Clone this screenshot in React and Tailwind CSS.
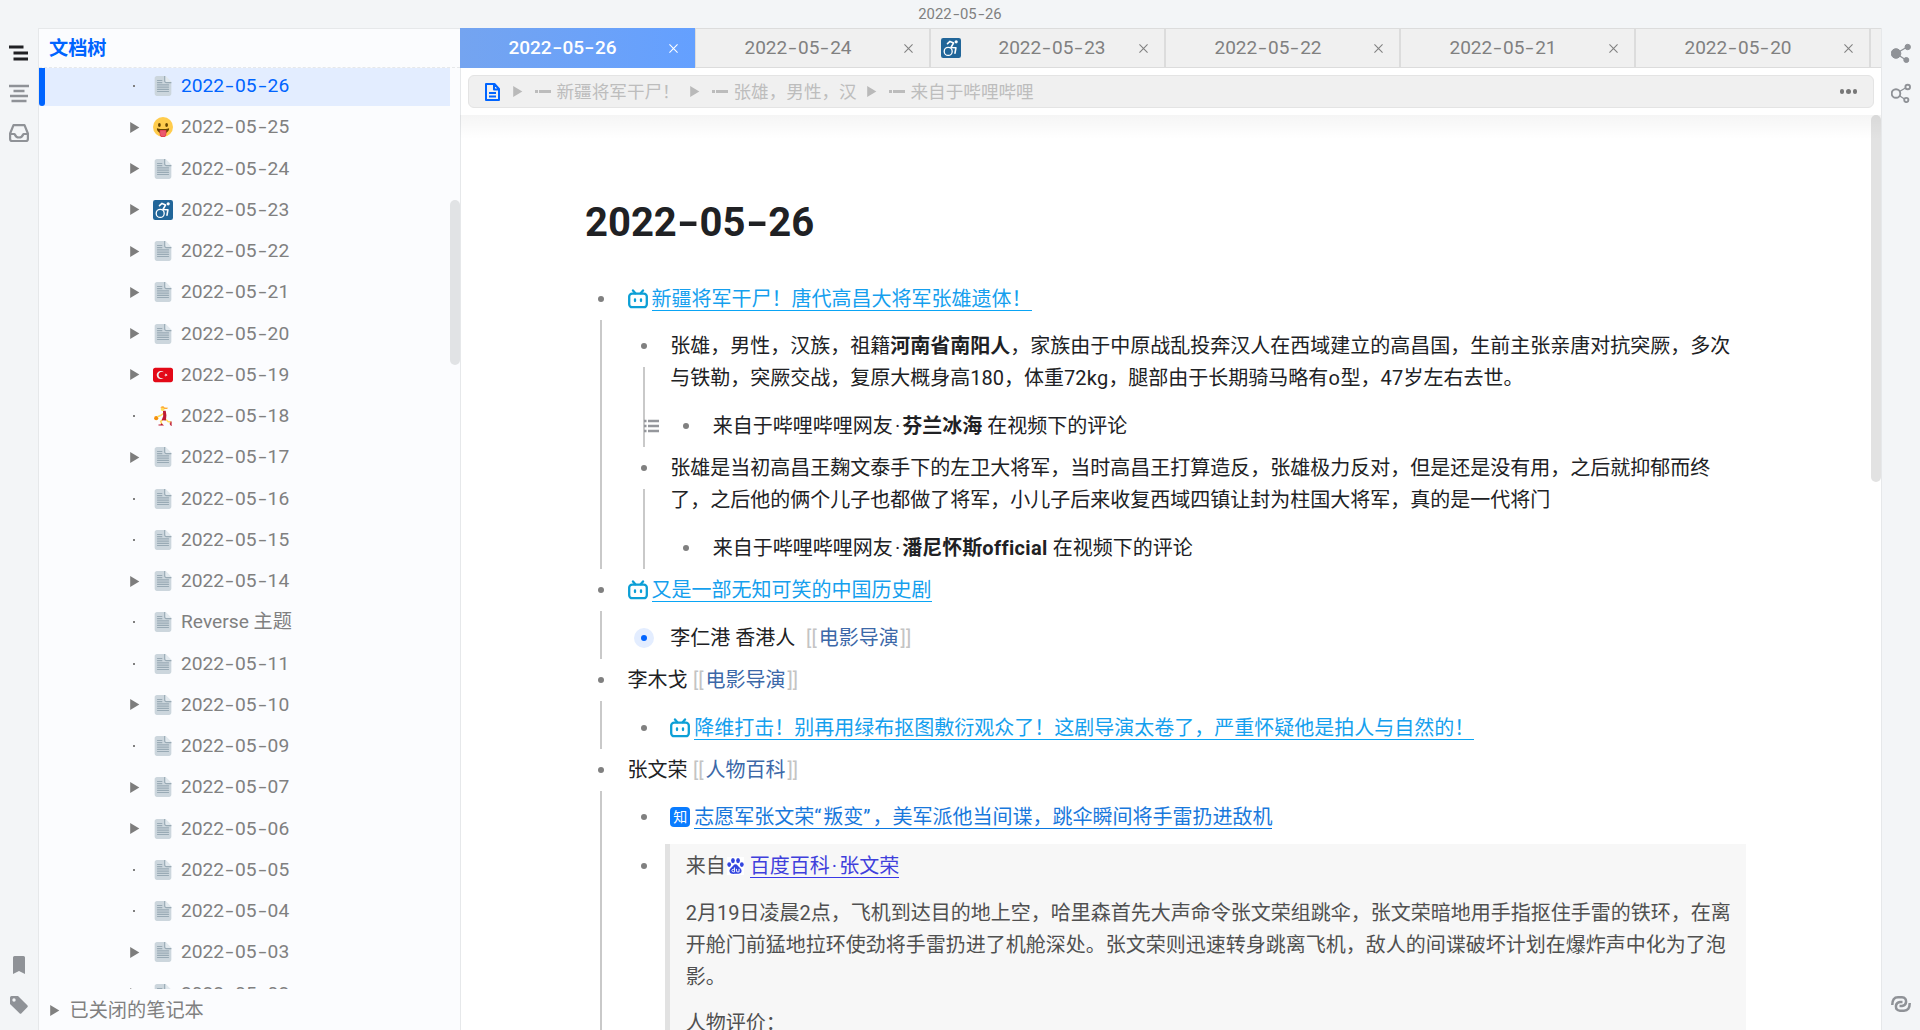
const DocIcon = ({ className = '' }) => (
  <svg viewBox="0 0 36 36" className={`h-5 w-5 shrink-0 ${className}`}>
    <path fill="#E1E8ED" d="M32.415 9.586l-9-9C23.054.225 22.553 0 22 0c-1.104 0-1.999.896-2 2 0 .552.224 1.053.586 1.415l-3.859 3.859 9 9 3.859-3.859c.362.361.862.585 1.414.585 1.104 0 2.001-.896 2-2 0-.552-.224-1.052-.585-1.414z" />
    <path fill="#CCD6DD" d="M22 0H7C4.791 0 3 1.791 3 4v28c0 2.209 1.791 4 4 4h22c2.209 0 4-1.791 4-4V11h-9c-1 0-2-1-2-2V0z" />
    <path fill="#99AAB5" d="M22 0h-2v9c0 2.209 1.791 4 4 4h9v-2h-9c-1 0-2-1-2-2V0zm-5 8c0 .552-.448 1-1 1H8c-.552 0-1-.448-1-1s.448-1 1-1h8c.552 0 1 .448 1 1zm0 4c0 .552-.448 1-1 1H8c-.552 0-1-.448-1-1s.448-1 1-1h8c.552 0 1 .448 1 1zm12 4c0 .552-.447 1-1 1H8c-.552 0-1-.448-1-1s.448-1 1-1h20c.553 0 1 .448 1 1zm0 4c0 .553-.447 1-1 1H8c-.552 0-1-.447-1-1 0-.553.448-1 1-1h20c.553 0 1 .447 1 1zm0 4c0 .553-.447 1-1 1H8c-.552 0-1-.447-1-1 0-.553.448-1 1-1h20c.553 0 1 .447 1 1zm0 4c0 .553-.447 1-1 1H8c-.552 0-1-.447-1-1 0-.553.448-1 1-1h20c.553 0 1 .447 1 1z" />
  </svg>
);

const TongueIcon = () => (
  <svg viewBox="0 0 36 36" className="h-5 w-5 shrink-0">
    <circle cx="18" cy="18" r="18" fill="#FFCC4D" />
    <ellipse cx="11.5" cy="14.5" rx="2.5" ry="3.5" fill="#664500" />
    <ellipse cx="24.5" cy="14.5" rx="2.5" ry="3.5" fill="#664500" />
    <path fill="#664500" d="M7 21.3c0-.8.8-1 1.500-.8 6 1.400 13 1.400 19 0 .8-.2 1.500 0 1.500.8 0 3-3.500 8.700-11 8.700S7 24.300 7 21.300z" />
    <path fill="#DD2E44" d="M12 23.500h12V30a6 6 0 0 1-12 0z" />
    <path fill="#EA596E" d="M13 24.500h10V30a5 5 0 0 1-10 0z" />
  </svg>
);

const WheelchairIcon = ({ className = '' }) => (
  <svg viewBox="0 0 20 20" className={`h-5 w-5 shrink-0 ${className}`}>
    <rect width="20" height="20" rx="2.200" fill="#226699" />
    <g fill="none" stroke="#fff" strokeLinecap="round" strokeLinejoin="round">
      <circle cx="7.200" cy="13.400" r="4" strokeWidth="1.300" />
      <path d="M6.500 5.600 9 3.400l3.600 1.500-2.600 4.600 4.900.3-.9 5.400" strokeWidth="1.600" />
    </g>
    <circle cx="15.200" cy="3.800" r="1.600" fill="#fff" />
  </svg>
);

const FlagIcon = () => (
  <svg viewBox="0 0 36 36" className="h-5 w-5 shrink-0">
    <path fill="#E30917" d="M36 27c0 2.209-1.791 4-4 4H4c-2.209 0-4-1.791-4-4V9c0-2.209 1.791-4 4-4h28c2.209 0 4 1.791 4 4v18z" />
    <path fill="#EEE" d="M16 24c-3.314 0-6-2.685-6-6 0-3.314 2.686-6 6-6 1.310 0 2.520.425 3.507 1.138-1.348-1.524-3.312-2.491-5.507-2.491-4.061 0-7.353 3.292-7.353 7.353 0 4.062 3.292 7.354 7.353 7.354 2.195 0 4.160-.967 5.507-2.492C18.521 23.575 17.312 24 16 24zm3.913-5.770l2.440.562.220 2.493 1.288-2.146 2.440.561-1.644-1.888 1.287-2.147-2.303.980-1.644-1.889.220 2.494z" />
  </svg>
);

const BasketballIcon = () => (
  <svg viewBox="0 0 20 20" className="h-5 w-5 shrink-0">
    <circle cx="3.200" cy="12.200" r="2.100" fill="#F4900C" />
    <path d="M11 7 7.500 9.500 4.500 10.800M9.700 14l-2 1.200 1.200 3.200M13 13.500l2 2 3.200.8" stroke="#FFDC5D" strokeWidth="1.500" fill="none" />
    <path d="M10 4.800h2.700l.7 4.500-.5 5.200-4.300-.3 1.600-4z" fill="#BE1931" />
    <circle cx="9.600" cy="3" r="1.900" fill="#FFDC5D" />
    <path d="M7.500 1.800C8-.2 11-.2 11.500 1.500l3.700.2-1.200 1.400-2.700-.2-.9-.8z" fill="#FFAC33" />
    <path d="M8 17.800 9.400 19H5.500M18 15.500v3.300l-1-1.500" stroke="#BE1931" strokeWidth="1.200" fill="none" />
  </svg>
);

const BiliIcon = () => (
  <svg viewBox="0 0 20 20" className="mt-1.5 mr-1 inline-block h-5 w-5 align-top" fill="none" stroke="#0c9fd6" strokeLinecap="round" strokeWidth="2.300">
    <rect x="1.200" y="4.600" width="17.600" height="13.600" rx="3" />
    <path d="M5 1.500 7.300 4.200M15 1.500 12.700 4.200M7 10.300v1.800M13 10.300v1.800" />
  </svg>
);

const ZhihuIcon = () => (
  <span className="mt-1.5 mr-1 inline-flex h-5 w-5 items-center justify-center rounded bg-[#0a7cff] align-top text-[14px] leading-5 text-white">知</span>
);

const BaiduIcon = () => (
  <svg viewBox="0 0 18 18" className="mt-[7px] mr-1.5 ml-px inline-block h-[18px] w-[17px] bg-white align-top" fill="#3245df">
    <ellipse cx="6.300" cy="3.300" rx="2" ry="2.700" />
    <ellipse cx="11.700" cy="3.300" rx="2" ry="2.700" />
    <ellipse cx="2.300" cy="7.500" rx="2" ry="2.500" />
    <ellipse cx="15.700" cy="7.500" rx="2" ry="2.500" />
    <path d="M9 7.200c-2 0-2.700 2.200-4.300 3.500-1.600 1.400-2.500 2.600-2 4.400.6 2.300 2.900 2.400 6.300 2.200s5.700.1 6.300-2.200c.5-1.800-.4-3-2-4.400C11.700 9.400 11 7.200 9 7.200z" />
    <path d="M8 10.500v4.700H6.600a1.300 1.300 0 0 1 0-2.700H8M10 12v2.200q0 1 1 1h1.800V12" fill="none" stroke="#fff" strokeWidth="1" />
  </svg>
);

const Arrow = ({ className = '' }) => (
  <svg viewBox="0 0 10 12" className={className} fill="currentColor">
    <path d="M0 0 10 6 0 12z" />
  </svg>
);

const DateText = ({ value }) =>
  value.split('-').map((part, i) => (
    <span key={i}>
      {i > 0 && <span className="inline-block w-[0.57em] scale-x-150 text-center">-</span>}
      {part}
    </span>
  ));

const Dot = () => <span className="inline-block w-[9.500px] text-center">·</span>;

const rows = [
  ['2022-05-26', false, 'doc'],
  ['2022-05-25', true, 'tongue'],
  ['2022-05-24', true, 'doc'],
  ['2022-05-23', true, 'wheel'],
  ['2022-05-22', true, 'doc'],
  ['2022-05-21', true, 'doc'],
  ['2022-05-20', true, 'doc'],
  ['2022-05-19', true, 'flag'],
  ['2022-05-18', false, 'ball'],
  ['2022-05-17', true, 'doc'],
  ['2022-05-16', false, 'doc'],
  ['2022-05-15', false, 'doc'],
  ['2022-05-14', true, 'doc'],
  ['Reverse 主题', false, 'doc'],
  ['2022-05-11', false, 'doc'],
  ['2022-05-10', true, 'doc'],
  ['2022-05-09', false, 'doc'],
  ['2022-05-07', true, 'doc'],
  ['2022-05-06', true, 'doc'],
  ['2022-05-05', false, 'doc'],
  ['2022-05-04', false, 'doc'],
  ['2022-05-03', true, 'doc'],
  ['2022-05-02', true, 'doc'],
];

const icons = { doc: DocIcon, tongue: TongueIcon, wheel: WheelchairIcon, flag: FlagIcon, ball: BasketballIcon };

const TreeRow = ({ row: [label, hasChildren, icon], active }) => {
  const Icon = icons[icon];
  return (
    <div className={`mb-[3.250px] flex h-[38px] w-[411px] shrink-0 ${active ? 'bg-[#e3edff] text-[#0064ff]' : 'text-[#808080]'}`}>
      <div className={`w-1.5 shrink-0 rounded-b-sm ${active ? 'bg-[#0064ff]' : ''}`} />
      <div className="flex h-9 items-center">
        <div className="flex w-[108px] justify-end pr-[13.500px]">
          {hasChildren ? <Arrow className="h-[11px] w-[9.500px] text-[#7d7d7d]" /> : <span className="mr-[5px] h-0.5 w-0.5 bg-[#808080]" />}
        </div>
        <Icon />
        <span className="ml-2 text-[19.200px] leading-9">{label.startsWith('2') ? <DateText value={label} /> : label}</span>
      </div>
    </div>
  );
};

const tabs = ['2022-05-26', '2022-05-24', '2022-05-23', '2022-05-22', '2022-05-21', '2022-05-20'];

const Tab = ({ label, active, icon }) => (
  <div
    className={`flex h-10 w-[235px] shrink-0 items-center pr-4 ${
      active ? 'bg-linear-to-r from-[#74a4f0] to-[#64a0ff] text-white' : 'border border-[#dcdcdc] bg-[#f0f0f0] text-[#808080]'
    }`}
  >
    {icon && <WheelchairIcon className="ml-2.5" />}
    <span className={`flex-1 text-center text-[19px] ${icon ? 'pl-1' : 'pr-1'} ${active ? 'font-medium' : ''}`}>
      <DateText value={label} />
    </span>
    <svg viewBox="0 0 10 10" className={`h-[9px] w-[9px] ${active ? 'mr-px' : ''}`} stroke="currentColor" strokeWidth="1.200">
      <path d="M.5.5l9 9M9.500.5l-9 9" />
    </svg>
  </div>
);

const Crumb = ({ children }) => (
  <div className="flex h-full items-center">
    <Arrow className="mr-3 h-[11px] w-[9.500px] text-[#b9b9b9]" />
    <span className="mr-px h-[3px] w-[3px] bg-[#bcbcbc]" />
    <span className="mr-1.5 h-[3px] w-3 bg-[#bcbcbc]" />
    <span className="w-[133.500px] pt-0.5 text-[17.600px] text-[#bdbdbd]">{children}</span>
  </div>
);

const Item = ({ children, nested, active, quote }) => (
  <li className="relative py-[5.100px] pl-[42.600px]">
    {nested && <span className="absolute top-[42px] bottom-0 left-[15px] w-0.5 bg-[#c9c9c9]" />}
    <span
      className={`absolute left-1.5 flex h-5 w-5 items-center justify-center rounded-full ${quote ? 'top-[17px]' : 'top-[11px]'} ${active ? 'bg-[#e3edff]' : ''}`}
    >
      <span className={`h-1.5 w-1.5 rounded-full ${active ? 'bg-[#0064ff]' : 'bg-[#808080]'}`} />
    </span>
    <div>{children}</div>
    {nested && <ul className="mt-[10.600px] mb-[-5.100px]">{nested}</ul>}
  </li>
);

const Link = ({ children, className = 'border-[#0aa5f5] text-[#159fee]' }) => (
  <span className={`inline-block h-[28px] border-b align-top ${className}`}>{children}</span>
);

const Ref = ({ children, className = 'ml-[3.500px]' }) => (
  <span className={className}>
    <span className="inline-block w-[14.500px] text-center text-[#c4c4c4]">[[</span>
    <span className="text-[#3c68a8]">{children}</span>
    <span className="inline-block w-[14.500px] text-center text-[#c4c4c4]">]]</span>
  </span>
);

export default function App() {
  return (
    <div className="flex h-[1030px] w-[1920px] flex-col overflow-hidden bg-[#f3f5f7] text-[#202124] [font-family:Roboto,'Noto_Sans_CJK_SC',sans-serif]">
      <header className="flex h-7 shrink-0 items-center justify-center text-[14.800px] text-[#808080]">
        <span>
          <DateText value="2022-05-26" />
        </span>
      </header>
      <div className="flex h-[1002px]">
        <nav className="flex w-[38px] shrink-0 flex-col items-center text-[#8f9297]">
          <svg viewBox="0 0 20 20" className="mt-[15px] h-5 w-5 text-[#202124]" stroke="currentColor" strokeWidth="3">
            <path d="M0 4h14.500M4.500 10H19M4.500 16H19" />
          </svg>
          <svg viewBox="0 0 20 20" className="mt-5 h-5 w-5" stroke="currentColor" strokeWidth="2.600">
            <path d="M0 3h20M4.500 8h11M1 13h18M2.500 18h15" />
          </svg>
          <svg viewBox="0 0 20 20" className="mt-5 h-5 w-5" fill="none" stroke="currentColor" strokeWidth="2.200" strokeLinejoin="round">
            <path d="M1.100 10.500 4.500 2.200h11L18.900 10.500V16q0 2-2 2H3.100q-2 0-2-2zM1 11h4.500q1.500 3.500 4.500 3.500t4.500-3.500H19" />
          </svg>
          <svg viewBox="0 0 12 18" className="mt-auto h-[18px] w-3" fill="currentColor">
            <path d="M1.500 0h9Q12 0 12 1.500V18l-6-3-6 3V1.500Q0 0 1.500 0z" />
          </svg>
          <svg viewBox="0 0 18 18" className="mt-[22px] mb-4 h-[18px] w-[18px]" fill="currentColor" fillRule="evenodd">
            <path d="M1.500 0H8l9.300 9.300q1 1 0 2L11.500 17.300q-1 1-2 0L0 8V1.500Q0 0 1.500 0zM4 2.300a1.700 1.700 0 1 0 0 3.400 1.700 1.700 0 0 0 0-3.400z" />
          </svg>
        </nav>

        <aside className="relative flex w-[423px] shrink-0 flex-col border-x border-t border-[#e6e8ea] bg-[#fbfcfe]">
          <div className="h-[39px] shrink-0 border-b border-dashed border-[#e6e8ea] pl-2.5 text-[19.200px] leading-10 font-bold text-[#0064ff]">文档树</div>
          <div className="flex h-[921px] flex-col overflow-hidden">
            {rows.map((row, i) => (
              <TreeRow key={row[0]} row={row} active={i === 0} />
            ))}
          </div>
          <div className="flex h-10 items-center pt-0.5 pl-[11px] text-[19.200px] text-[#808080]">
            <Arrow className="mr-2.5 h-[11px] w-[9.500px]" />
            <span className="pt-0.5">已关闭的笔记本</span>
          </div>
          <span className="absolute top-[171px] right-0 h-[165px] w-2.5 rounded-full bg-[#e1e3e5]" />
        </aside>

        <main className="-ml-px flex min-w-0 flex-1 flex-col bg-white">
          <div className="z-10 flex h-10 shrink-0 overflow-hidden">
            {tabs.map((label, i) => (
              <Tab key={label} label={label} active={i === 0} icon={i === 2} />
            ))}
            <div className="h-10 flex-1 border border-r-0 border-[#dcdcdc] bg-[#f0f0f0]" />
          </div>
          <div className="h-[47px] shrink-0 pt-[7px] pr-[7px] pl-2">
            <div className="flex h-[33px] items-center rounded-md border border-[#e4e4e4] bg-[#f0f0f0] pr-4 pl-4">
              <svg viewBox="0 0 15 18" className="mr-[13px] h-[18px] w-[15px]" fill="none" stroke="#0064ff" strokeWidth="2" strokeLinejoin="round">
                <path d="M1 1h8.500L14 6v11H1zM9 1v5.500h5M4 10h7M4 13.500h7" />
              </svg>
              <Crumb>新疆将军干尸！</Crumb>
              <Crumb>张雄，男性，汉</Crumb>
              <Crumb>来自于哔哩哔哩</Crumb>
              <div className="ml-auto flex gap-0.5">
                <i className="h-[4.500px] w-[4.500px] rounded-full bg-[#777]" />
                <i className="h-[4.500px] w-[4.500px] rounded-full bg-[#777]" />
                <i className="h-[4.500px] w-[4.500px] rounded-full bg-[#777]" />
              </div>
            </div>
          </div>

          <div className="relative h-[915px] overflow-hidden pl-[125px]">
            <span className="absolute top-0 right-0 h-[367px] w-2.5 rounded-full bg-[#e2e2e2]" />
            <span className="absolute inset-x-0 top-0 h-6 bg-linear-to-b from-black/4 to-transparent" />
            <h1 className="mt-[78px] text-[40px] leading-[60px] font-bold">
              <DateText value="2022-05-26" />
            </h1>
            <ul className="mt-[24.500px] w-[1160px] text-[20px] leading-8 whitespace-nowrap">
              <Item
                nested={
                  <>
                    <Item
                      nested={
                        <Item>
                          <svg viewBox="0 0 15 14" className="absolute top-[14px] -left-[26px] h-[14px] w-[15px]" stroke="#95979c" strokeWidth="2.400">
                            <path d="M0 2h2.500M4 2h11M0 7h2.500M4 7h11M0 12h2.500M4 12h11" />
                          </svg>
                          来自于哔哩哔哩网友
                          <Dot />
                          <b>芬兰冰海</b> 在视频下的评论
                        </Item>
                      }
                    >
                      张雄，男性，汉族，祖籍<b>河南省南阳人</b>，家族由于中原战乱投奔汉人在西域建立的高昌国，生前主张亲唐对抗突厥，多次
                      <br />
                      与铁勒，突厥交战，复原大概身高180，体重<span className="tracking-[0.2px]">72kg</span>，腿部由于长期骑马略有
                      <span className="tracking-[0.8px]">o</span>型，<span className="tracking-[0.2px]">47</span>岁左右去世。
                    </Item>
                    <Item
                      nested={
                        <Item>
                          来自于哔哩哔哩网友
                          <Dot />
                          <b>
                            潘尼怀斯<span className="tracking-[0.35px]">official</span>
                          </b>{' '}
                          在视频下的评论
                        </Item>
                      }
                    >
                      张雄是当初高昌王麹文泰手下的左卫大将军，当时高昌王打算造反，张雄极力反对，但是还是没有用，之后就抑郁而终
                      <br />
                      了，之后他的俩个儿子也都做了将军，小儿子后来收复西域四镇让封为柱国大将军，真的是一代将门
                    </Item>
                  </>
                }
              >
                <BiliIcon />
                <Link>新疆将军干尸！唐代高昌大将军张雄遗体！</Link>
              </Item>
              <Item
                nested={
                  <Item active>
                    李仁港 香港人<Ref className="ml-[9px]">电影导演</Ref>
                  </Item>
                }
              >
                <BiliIcon />
                <Link>又是一部无知可笑的中国历史剧</Link>
              </Item>
              <Item
                nested={
                  <Item>
                    <BiliIcon />
                    <Link>降维打击！别再用绿布抠图敷衍观众了！这剧导演太卷了，严重怀疑他是拍人与自然的！</Link>
                  </Item>
                }
              >
                李木戈<Ref>电影导演</Ref>
              </Item>
              <Item
                nested={
                  <>
                    <Item>
                      <ZhihuIcon />
                      <Link className="border-[#0a78e0] text-[#1878dc]">
                        志愿军张文荣<span className="tracking-[2px]">“</span>叛变<span className="tracking-[2px]">”</span>，美军派他当间谍，跳伞瞬间将手雷扔进敌机
                      </Link>
                    </Item>
                    <Item quote>
                      <blockquote className="-ml-[5px] w-[1081px] border-l-[5px] border-[#e2e2e2] bg-[#f7f7f7] pt-1.5 pb-10 pl-[15.500px] text-[#505050]">
                        <p>
                          来自
                          <BaiduIcon />
                          <Link className="border-[#3a3ae6] text-[#3f3fdc]">
                            百度百科
                            <Dot />
                            张文荣
                          </Link>
                        </p>
                        <p className="mt-[15px]">
                          2月19日凌晨2点，飞机到达目的地上空，哈里森首先大声命令张文荣组跳伞，张文荣暗地用手指抠住手雷的铁环，在离
                          <br />
                          开舱门前猛地拉环使劲将手雷扔进了机舱深处。张文荣则迅速转身跳离飞机，敌人的间谍破坏计划在爆炸声中化为了泡
                          <br />
                          影。
                        </p>
                        <p className="mt-3.5">人物评价：</p>
                      </blockquote>
                    </Item>
                  </>
                }
              >
                张文荣<Ref>人物百科</Ref>
              </Item>
            </ul>
          </div>
        </main>

        <nav className="flex w-[39px] shrink-0 flex-col items-center border-l border-[#e6e8ea] text-[#8f9297]">
          <svg viewBox="0 0 20 20" className="mt-[15px] h-5 w-5" fill="currentColor" stroke="currentColor">
            <path d="M5 10.500 17 3.500M5 10.500l10 6.500" strokeWidth="1.400" />
            <circle cx="5" cy="10.500" r="4.800" />
            <circle cx="16.700" cy="4" r="2.700" />
            <circle cx="15.300" cy="17" r="2.500" />
          </svg>
          <svg viewBox="0 0 20 20" className="mt-5 h-5 w-5" fill="#f3f5f7" stroke="currentColor" strokeWidth="1.900">
            <path d="M5 10.500 17 3.500M5 10.500l10 6.500" strokeWidth="1.400" />
            <circle cx="5" cy="10.500" r="4.300" />
            <circle cx="16.700" cy="4" r="2.300" />
            <circle cx="15.300" cy="17" r="2.100" />
          </svg>
          <svg viewBox="0 0 20 16" className="mt-auto mb-[18px] h-4 w-5" fill="none" stroke="currentColor" strokeWidth="2.500">
            <path d="M1.300 9Q1.200 1.300 7 1.300h4Q15.500 1.500 15 6.500 14.500 9.500 11 10H8.500" />
            <path d="M18.700 7Q18.800 14.700 13 14.700H9Q4.500 14.500 5 9.500 5.500 6.500 9 6h2.500" />
          </svg>
        </nav>
      </div>
    </div>
  );
}
